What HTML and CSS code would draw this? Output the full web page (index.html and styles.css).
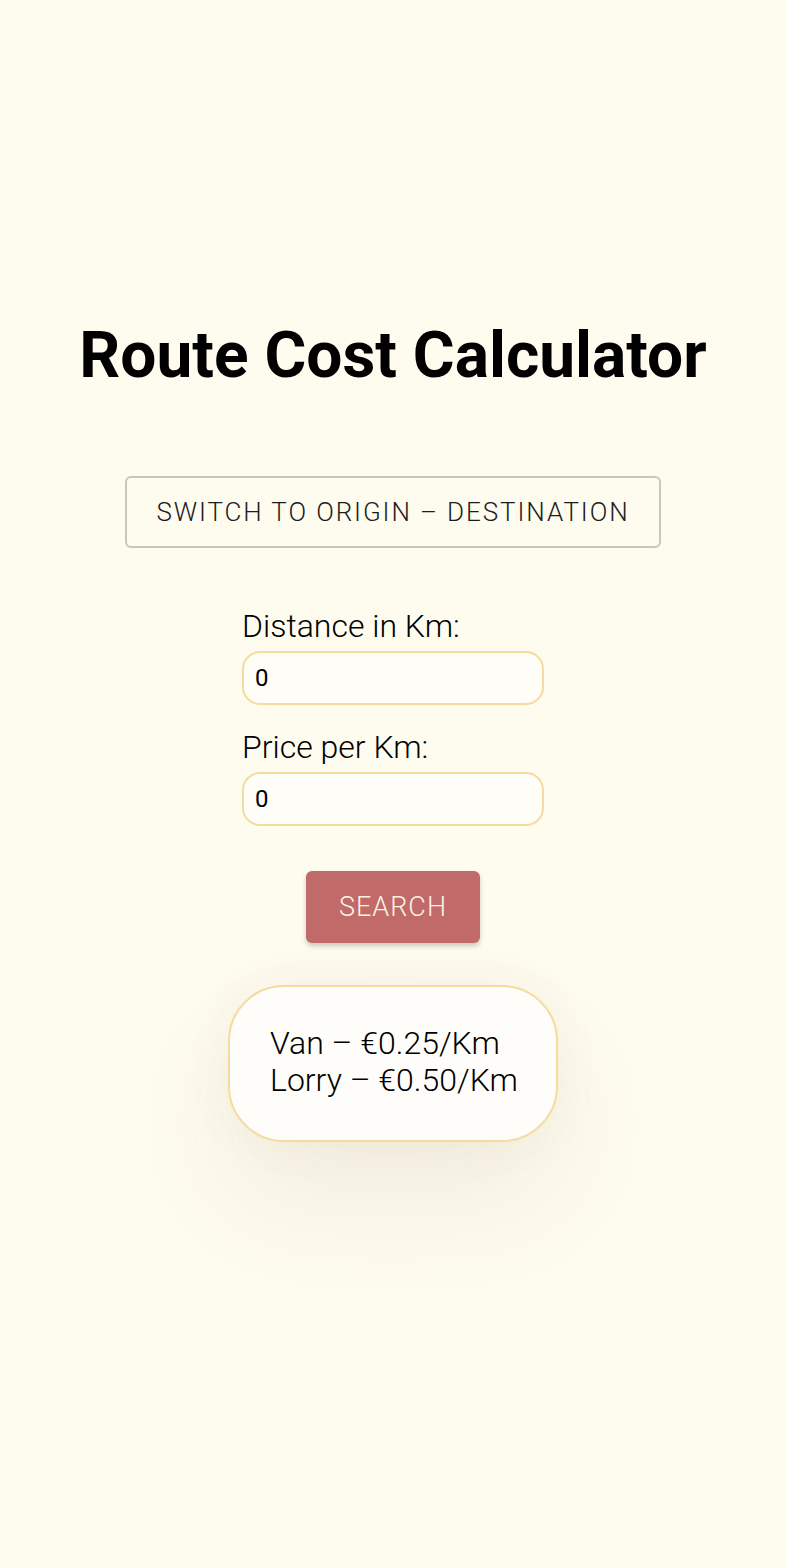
FILE: index.html
```html
<!DOCTYPE html>
<html lang="en">
<head>
<meta charset="utf-8">
<title>Route Cost Calculator</title>
<link rel="stylesheet" href="styles.css">
</head>
<body>
<main class="app">
  <h1 class="title">Route Cost Calculator</h1>
  <button class="switch-btn" type="button">Switch to Origin – Destination</button>
  <form class="form">
    <label class="field">
      <span class="label">Distance in Km:</span>
      <input class="input" type="text" value="0">
    </label>
    <label class="field">
      <span class="label">Price per Km:</span>
      <input class="input" type="text" value="0">
    </label>
    <button class="search-btn" type="button">Search</button>
  </form>
  <div class="rates">
    <div>Van – €0.25/Km</div>
    <div>Lorry – €0.50/Km</div>
  </div>
</main>
</body>
</html>
```
FILE: styles.css
```css
html, body {
  margin: 0;
  padding: 0;
  background: #fefbef;
}
body {
  min-height: 100vh;
  font-family: Roboto, "Noto Sans", sans-serif;
  color: #000;
}
.app {
  display: flex;
  flex-direction: column;
  align-items: center;
  padding-top: 318px;
}
.title {
  margin: 0;
  font-size: 64px;
  font-weight: 700;
  line-height: 75px;
}
.switch-btn {
  margin-top: 83px;
  width: 536px;
  height: 72px;
  border: 2px solid #cac6b8;
  border-radius: 6px;
  background: transparent;
  font-family: Roboto, sans-serif;
  font-weight: 300;
  font-size: 26px;
  letter-spacing: 1.9px;
  text-transform: uppercase;
  color: #1c1c1c;
}
.form {
  margin-top: 60px;
  display: flex;
  flex-direction: column;
  align-items: center;
}
.field {
  display: flex;
  flex-direction: column;
  width: 302px;
  margin-bottom: 24px;
}
.label {
  font-size: 32px;
  font-weight: 300;
  line-height: 37px;
  margin-bottom: 6px;
}
.input {
  box-sizing: border-box;
  width: 302px;
  height: 54px;
  border: 2px solid #f4dc9f;
  border-radius: 18px;
  background: #fffdf8;
  padding: 0 11px;
  font-family: Roboto, sans-serif;
  font-size: 24px;
  color: #000;
  outline: none;
}
.search-btn {
  margin-top: 21px;
  width: 174px;
  height: 72px;
  border: none;
  border-radius: 6px;
  background: #c06a6a;
  color: #fdf2e4;
  font-family: Roboto, sans-serif;
  font-weight: 300;
  font-size: 27px;
  letter-spacing: 1px;
  text-transform: uppercase;
  box-shadow: 0 3px 5px rgba(0, 0, 0, 0.2);
}
.rates {
  margin-top: 42px;
  box-sizing: border-box;
  width: 330px;
  height: 157px;
  border: 2px solid #f4dc9f;
  border-radius: 56px;
  background: #fffdfa;
  padding: 38px 20px 38px 40px;
  font-size: 32px;
  font-weight: 300;
  line-height: 37px;
  white-space: nowrap;
  box-shadow: 0 60px 110px rgba(110, 85, 40, 0.08), 0 0 50px rgba(110, 85, 40, 0.05);
}
```
